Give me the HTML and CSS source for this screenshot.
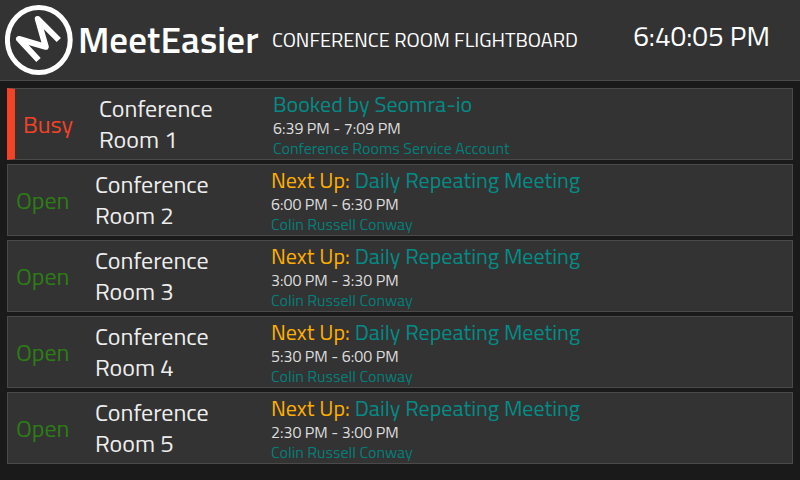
FILE: index.html
```
<!DOCTYPE html>
<html lang="en">
<head>
<meta charset="utf-8">
<title>MeetEasier</title>
<link rel="stylesheet" href="styles.css">
</head>
<body>
<header class="header">
  <div class="logo">
    <svg class="logo-mark" viewBox="0 0 70 72" width="70" height="72" aria-hidden="true">
      <ellipse cx="33.8" cy="35" rx="31.4" ry="32.5" fill="none" stroke="#fff" stroke-width="5"/>
      <path d="M33.5 55 L14 34 L40.8 41.8 L32.8 14 L53.8 35" fill="none" stroke="#fff" stroke-width="6" stroke-linejoin="round"/>
    </svg>
    <span class="logo-name">MeetEasier</span>
  </div>
  <h1 class="heading">Conference Room Flightboard</h1>
  <time class="clock">6:40:05 PM</time>
</header>
<main class="board">
  <section class="room room-busy">
    <div class="status">Busy</div>
    <div class="name">Conference Room 1</div>
    <div class="details">
      <div class="meeting">Booked by Seomra-io</div>
      <div class="time">6:39 PM - 7:09 PM</div>
      <div class="organizer">Conference Rooms Service Account</div>
    </div>
  </section>
  <section class="room">
    <div class="status">Open</div>
    <div class="name">Conference Room 2</div>
    <div class="details">
      <div class="meeting"><span class="next">Next Up:</span> Daily Repeating Meeting</div>
      <div class="time">6:00 PM - 6:30 PM</div>
      <div class="organizer">Colin Russell Conway</div>
    </div>
  </section>
  <section class="room">
    <div class="status">Open</div>
    <div class="name">Conference Room 3</div>
    <div class="details">
      <div class="meeting"><span class="next">Next Up:</span> Daily Repeating Meeting</div>
      <div class="time">3:00 PM - 3:30 PM</div>
      <div class="organizer">Colin Russell Conway</div>
    </div>
  </section>
  <section class="room">
    <div class="status">Open</div>
    <div class="name">Conference Room 4</div>
    <div class="details">
      <div class="meeting"><span class="next">Next Up:</span> Daily Repeating Meeting</div>
      <div class="time">5:30 PM - 6:00 PM</div>
      <div class="organizer">Colin Russell Conway</div>
    </div>
  </section>
  <section class="room">
    <div class="status">Open</div>
    <div class="name">Conference Room 5</div>
    <div class="details">
      <div class="meeting"><span class="next">Next Up:</span> Daily Repeating Meeting</div>
      <div class="time">2:30 PM - 3:00 PM</div>
      <div class="organizer">Colin Russell Conway</div>
    </div>
  </section>
</main>
</body>
</html>
```
FILE: styles.css
```
* { box-sizing: border-box; }

body {
  margin: 0;
  height: 480px;
  overflow: hidden;
  background: #1a1a1a;
  color: #fff;
  font-family: "Titillium Web", Roboto, sans-serif;
}

.header {
  display: flex;
  align-items: center;
  height: 81px;
  padding: 0 30px 0 5px;
  background: #333;
  border-bottom: 1px solid #4a4a4a;
}

.logo {
  display: flex;
  align-items: center;
  width: 267px;
}

.logo-mark { flex: none; margin-top: 2px; }

.logo-name {
  margin: 0 0 2px 3px;
  font-size: 37px;
  font-weight: 600;
  letter-spacing: 0.1px;
  line-height: 40px;
}

.heading {
  margin: 0;
  font-size: 20px;
  font-weight: 400;
  line-height: 30px;
  text-transform: uppercase;
}

.clock {
  margin: 0 0 8px auto;
  font-size: 28px;
  line-height: 36px;
}

.board {
  display: flex;
  flex-direction: column;
  gap: 4px;
  padding: 7px 7px 0;
}

.room {
  display: grid;
  grid-template-columns: 79px 176px 1fr;
  align-items: center;
  height: 72px;
  padding-left: 8px;
  background: #333;
  border: 1px solid #4a4a4a;
}

.room-busy {
  grid-template-columns: 76px 174px 1fr;
  border-left: 8px solid #f44226;
}

.status {
  color: #2d7d15;
  font-size: 24px;
  font-weight: 400;
  line-height: 31px;
}

.room-busy .status { color: #f44226; }

.name {
  width: 130px;
  color: #eee;
  font-size: 24px;
  line-height: 31px;
}

.meeting {
  color: #048b86;
  font-size: 22px;
  line-height: 28px;
}

.next { color: #ffae00; }

.time {
  color: #ddd;
  font-size: 16px;
  line-height: 20px;
}

.organizer {
  color: #047f7a;
  font-size: 16px;
  line-height: 20px;
}
```
